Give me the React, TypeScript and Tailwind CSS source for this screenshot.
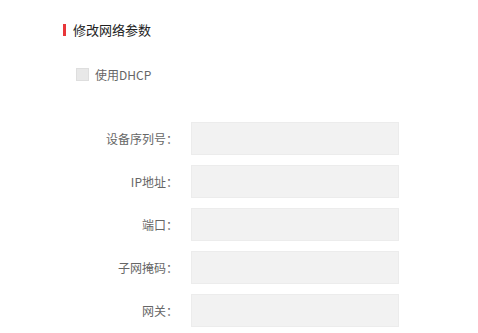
import React from "react"

const FONT = { fontFamily: '"Microsoft YaHei", "Noto Sans CJK SC", "Noto Sans", sans-serif' }

const FIELDS = ["设备序列号", "IP地址", "端口", "子网掩码", "网关"]

function FieldRow({ label }: { label: string }) {
  return (
    <div className="flex items-center">
      <label className="w-[178px] text-right text-[12px] text-[#666666]">{label}：</label>
      <input
        type="text"
        className="ml-[13px] h-[33px] w-[208px] border border-[#ececec] bg-[#f2f2f2] px-2 text-[12px] outline-none"
      />
    </div>
  )
}

export default function App() {
  return (
    <div className="h-[333px] w-[478px] overflow-hidden bg-white" style={FONT}>
      <div className="flex items-center pl-[63px] pt-[24px]">
        <span className="h-[12px] w-[3px] bg-[#e8363a]" />
        <h2 className="ml-[7px] text-[13px] leading-[12px] font-normal text-[#222222]">修改网络参数</h2>
      </div>

      <div className="mt-[32px] flex items-center pl-[76px]">
        <span className="h-[13px] w-[13px] border border-[#dedede] bg-[#e8e8e8]" />
        <span className="ml-[6px] text-[12px] leading-[13px] text-[#666666]">使用DHCP</span>
      </div>

      <div className="mt-[41px] flex flex-col gap-[10px]">
        {FIELDS.map((f) => (
          <FieldRow key={f} label={f} />
        ))}
      </div>
    </div>
  )
}
